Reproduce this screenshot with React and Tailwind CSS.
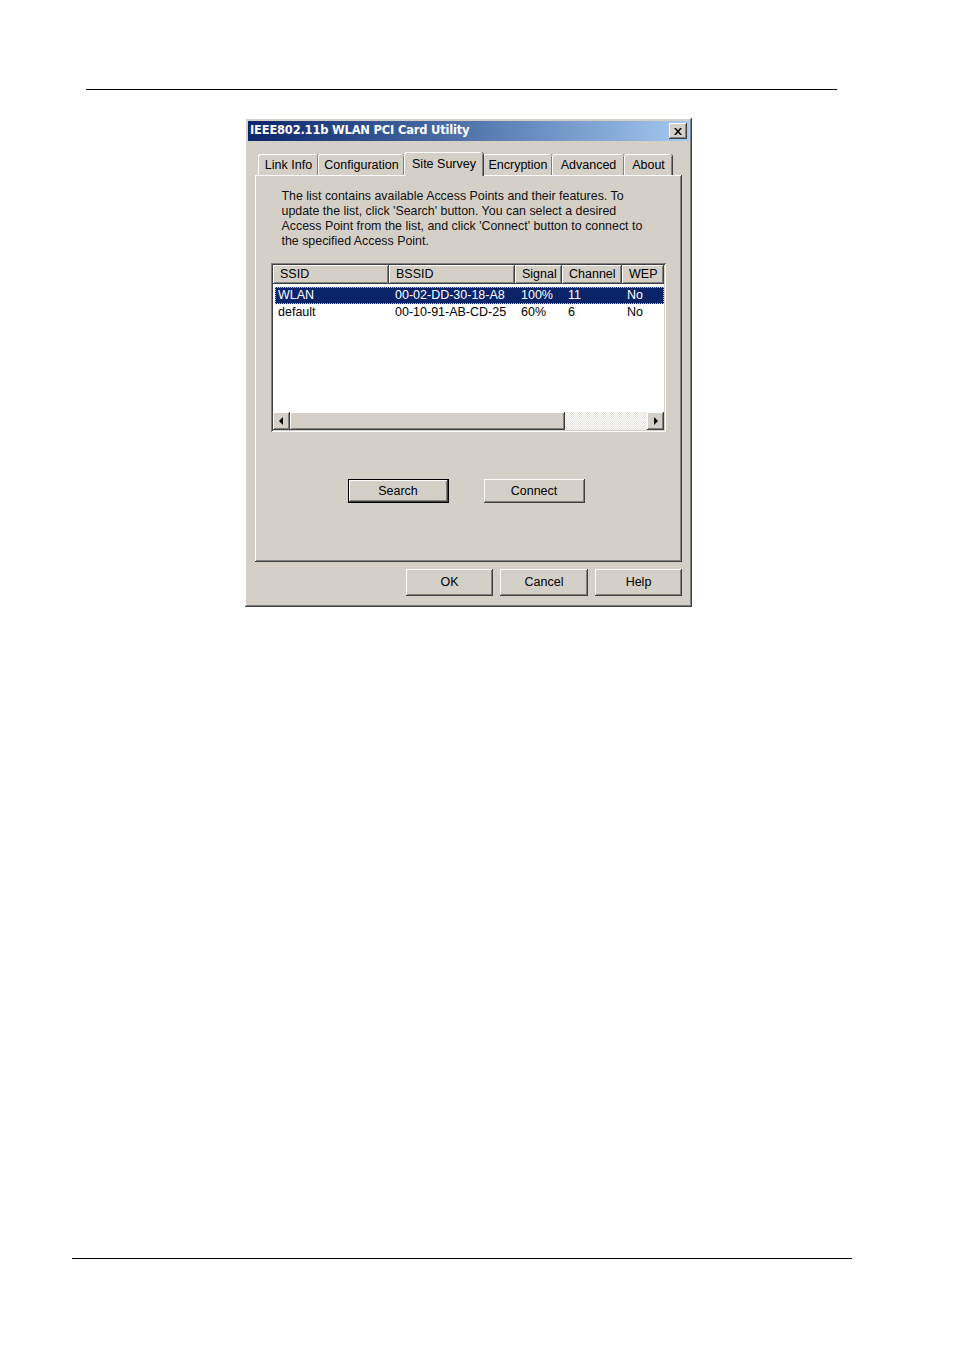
import React from "react";

const raised =
  "shadow-[inset_-1px_-1px_#404040,inset_1px_1px_#ffffff,inset_-2px_-2px_#808080,inset_2px_2px_#d4d0c8]";
const sunken =
  "shadow-[inset_1px_1px_#808080,inset_-1px_-1px_#ffffff,inset_2px_2px_#404040,inset_-2px_-2px_#d4d0c8]";

const tabs = [
  { label: "Link Info", w: "w-[60px]" },
  { label: "Configuration", w: "w-[86px]" },
  { label: "Site Survey", w: "w-[79px]", active: true },
  { label: "Encryption", w: "w-[69px]" },
  { label: "Advanced", w: "w-[72px]" },
  { label: "About", w: "w-[48px]" },
];

const columns = [
  { label: "SSID", w: "w-[116px]" },
  { label: "BSSID", w: "w-[126px]" },
  { label: "Signal", w: "w-[47px]" },
  { label: "Channel", w: "w-[60px]" },
  { label: "WEP", w: "w-[42px]" },
];

const rows = [
  ["WLAN", "00-02-DD-30-18-A8", "100%", "11", "No"],
  ["default", "00-10-91-AB-CD-25", "60%", "6", "No"],
];

const Button = ({ children, className, isDefault }) => (
  <button
    className={`flex items-center justify-center bg-[#d4d0c8] text-[12.5px] text-black ${
      isDefault ? "border border-black shadow-[inset_-1px_-1px_#404040,inset_1px_1px_#ffffff,inset_-2px_-2px_#808080]" : raised
    } ${className}`}
  >
    {children}
  </button>
);

const Arrow = ({ dir }) => (
  <div className={`flex h-[18px] w-[17px] items-center justify-center bg-[#d4d0c8] ${raised}`}>
    <svg width="5" height="8" viewBox="0 0 5 8">
      {dir === "left" ? <path d="M4 0v8L0 4z" fill="#000" /> : <path d="M1 0v8l4-4z" fill="#000" />}
    </svg>
  </div>
);

export default function App() {
  return (
    <div className="flex min-h-[1351px] w-[954px] flex-col bg-white font-['Liberation_Sans',Arial,sans-serif]">
      <div className="ml-[86px] mt-[89px] h-px w-[751px] bg-black" />

      {/* DIALOG */}
      <div className={`ml-[245px] mt-[28px] flex h-[489px] w-[447px] flex-col bg-[#d4d0c8] p-[3px] ${raised}`}>
        {/* TITLE BAR */}
        <div className="flex h-[20px] items-center justify-between bg-gradient-to-r from-[#0a246a] to-[#a6caf0] pl-[2px] pr-[2px]">
          <span className="font-['DejaVu_Sans',Verdana,sans-serif] text-[11.5px] font-bold tracking-[-0.2px] text-white">
            IEEE802.11b WLAN PCI Card Utility
          </span>
          <div className={`flex h-[16px] w-[18px] items-center justify-center bg-[#d4d0c8] ${raised}`}>
            <svg width="8" height="7" viewBox="0 0 8 7">
              <path d="M0 0h2l2 2.5L6 0h2L5 3.5 8 7H6L4 4.5 2 7H0l3-3.5z" fill="#000" />
            </svg>
          </div>
        </div>

        {/* TABS */}
        <div className="ml-[10px] mt-[10px] flex h-[24px] items-end">
          {tabs.map((t) =>
            t.active ? (
              <div
                key={t.label}
                className={`relative z-10 -mb-px flex h-[24px] ${t.w} items-start justify-center rounded-t-[3px] border-l border-t border-white bg-[#d4d0c8] pt-[2px] text-[12.5px] shadow-[inset_-1px_0_#808080,1px_0_#404040]`}
              >
                {t.label}
              </div>
            ) : (
              <div
                key={t.label}
                className={`flex h-[21px] ${t.w} items-center justify-center rounded-t-[3px] border-l border-t border-white text-[12.5px] shadow-[inset_-1px_0_#808080,1px_0_#404040]`}
              >
                {t.label}
              </div>
            )
          )}
        </div>

        {/* PANEL */}
        <div className={`ml-[7px] flex h-[387px] w-[427px] flex-col items-center ${raised}`}>
          <p className="mt-[14px] w-[374px] text-[12.4px] leading-[15px] text-[#111]">
            The list contains available Access Points and their features. To
            <br />
            update the list, click 'Search' button. You can select a desired
            <br />
            Access Point from the list, and click 'Connect' button to connect to
            <br />
            the specified Access Point.
          </p>

          {/* LIST */}
          <div className={`mt-[14px] flex h-[169px] w-[395px] flex-col bg-white p-[2px] ${sunken}`}>
            <div className="flex h-[19px]">
              {columns.map((c) => (
                <div
                  key={c.label}
                  className={`flex ${c.w} items-center bg-[#d4d0c8] pl-[7px] text-[12.5px] ${raised}`}
                >
                  {c.label}
                </div>
              ))}
            </div>
            <div className="mt-[3px] flex flex-1 flex-col pl-[2px]">
              {rows.map((r, i) => (
                <div
                  key={r[0]}
                  className={`flex h-[17px] items-center text-[12.5px] ${
                    i === 0 ? "bg-[#0a246a] text-white outline-1 outline-dotted outline-offset-[-1px] outline-[#d8c86a]" : "text-black"
                  }`}
                >
                  <span className="w-[120px] pl-[3px]">{r[0]}</span>
                  <span className="w-[126px]">{r[1]}</span>
                  <span className="w-[47px]">{r[2]}</span>
                  <span className="w-[59px]">{r[3]}</span>
                  <span>{r[4]}</span>
                </div>
              ))}
            </div>
            {/* SCROLLBAR */}
            <div className="flex h-[18px]">
              <Arrow dir="left" />
              <div className={`h-[18px] w-[275px] bg-[#d4d0c8] ${raised}`} />
              <div className="h-[18px] flex-1 bg-[repeating-conic-gradient(#ffffff_0_25%,#e4e2dc_0_50%)] bg-[length:2px_2px]" />
              <Arrow dir="right" />
            </div>
          </div>

          <div className="mr-[5px] mt-[47px] flex gap-[35px]">
            <Button isDefault className="h-[24px] w-[101px]">Search</Button>
            <Button className="h-[24px] w-[101px]">Connect</Button>
          </div>
        </div>

        {/* FOOTER BUTTONS */}
        <div className="mt-[7px] flex justify-end gap-[7px] pr-[7px]">
          <Button className="h-[27px] w-[87px]">OK</Button>
          <Button className="h-[27px] w-[88px]">Cancel</Button>
          <Button className="h-[27px] w-[87px]">Help</Button>
        </div>
      </div>

      <div className="ml-[72px] mt-[651px] h-px w-[780px] bg-black" />
    </div>
  );
}
